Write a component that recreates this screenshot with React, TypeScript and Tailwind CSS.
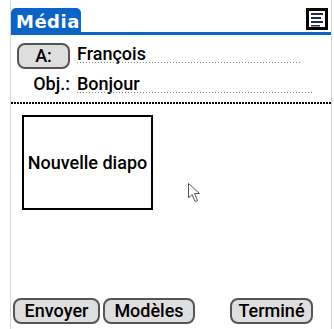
import React from "react";

const body = "font-['Roboto','Liberation_Sans',sans-serif] font-medium";

const PalmButton = ({ label, className = "" }: { label: string; className?: string }) => (
  <div
    className={`h-[26px] border-2 border-[#555] rounded-[8px] bg-[#dedede] flex items-center justify-center text-[18px] leading-[22px] text-black ${className}`}
  >
    {label}
  </div>
);

const MenuIcon = () => (
  <div className="mt-[8px] w-[22px] h-[22px] border-[3px] border-black bg-white">
    <svg width="16" height="16" viewBox="0 0 16 16">
      <rect x="2" y="2" width="12" height="2" fill="#1e2a5a" />
      <rect x="2" y="6" width="10" height="2" fill="#1e2a5a" />
      <rect x="2" y="10" width="12" height="2" fill="#1e2a5a" />
      <rect x="2" y="14" width="9" height="1.5" fill="#1e2a5a" />
    </svg>
  </div>
);

const Cursor = () => (
  <svg className="absolute left-[177px] top-[183px]" width="13" height="20" viewBox="0 0 13 20">
    <path
      d="M0.5 0.5 V15 L4 11.5 L7 18.5 L9.5 17.5 L6.5 10.5 L11.5 10.5 Z"
      fill="#fff"
      stroke="#555"
      strokeWidth="1"
      strokeLinejoin="miter"
    />
  </svg>
);

export default function App() {
  return (
    <div className={`w-[334px] h-[329px] bg-white pl-[10px] pr-[2px] ${body}`}>
      <div className="h-full border-x border-[#d6d6d6] flex flex-col relative">
        {/* title bar */}
        <div className="h-[32px] flex justify-between pr-[3px]">
          <div className="mt-[8px] h-[24px] w-[70px] rounded-t-[5px] bg-[#0a64c8] pl-[5px] pt-[2px]">
            <span className="font-['DejaVu_Sans',sans-serif] font-bold text-[18px] tracking-[0.5px] leading-[24px] text-white">
              Média
            </span>
          </div>
          <MenuIcon />
        </div>
        <div className="h-[3px] bg-[#0a64c8]" />

        {/* A: row */}
        <div className="mt-[8px] pl-[6px] flex items-start gap-[7px]">
          <PalmButton label="A:" className="w-[53px]" />
          <div className="mt-[1px] w-[225px] flex flex-col">
            <div className="h-[18px] text-[18px] leading-[20px] text-black">François</div>
            <div className="h-px bg-[repeating-linear-gradient(to_right,#8a8a8a_0_1px,transparent_1px_3px)]" />
          </div>
        </div>

        {/* Obj row */}
        <div className="mt-[5px] pl-[6px] flex items-start gap-[7px]">
          <div className="w-[53px] h-[18px] text-right text-[18px] leading-[20px] text-black">Obj.:</div>
          <div className="w-[237px] flex flex-col">
            <div className="h-[18px] text-[18px] leading-[20px] text-black">Bonjour</div>
            <div className="h-px bg-[repeating-linear-gradient(to_right,#8a8a8a_0_1px,transparent_1px_3px)]" />
          </div>
        </div>

        <div className="mt-[9px] h-[2px] bg-[repeating-linear-gradient(to_right,#000_0_2px,transparent_2px_3px)]" />

        {/* slide thumbnail */}
        <div className="mt-[11px] ml-[11px] w-[131px] h-[95px] border-2 border-black flex items-center justify-center">
          <span className="text-[18px] leading-[22px] text-black">Nouvelle diapo</span>
        </div>

        <Cursor />

        <div className="flex-1" />

        {/* bottom buttons */}
        <div className="mb-[5px] pl-[2px] flex">
          <PalmButton label="Envoyer" className="w-[87px]" />
          <PalmButton label="Modèles" className="w-[92px] ml-[3px]" />
          <PalmButton label="Terminé" className="w-[83px] ml-[35px]" />
        </div>
      </div>
    </div>
  );
}
